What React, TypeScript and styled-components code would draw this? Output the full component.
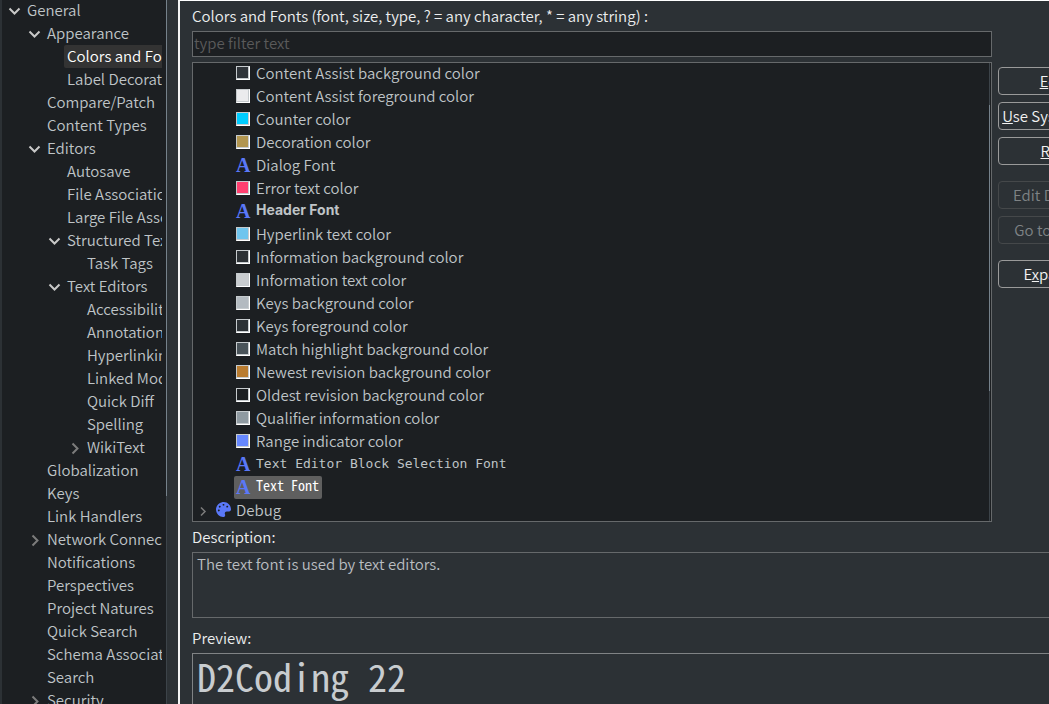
import React from 'react';
import styled, { createGlobalStyle, css } from 'styled-components';
import { FaPalette } from 'react-icons/fa';

const ui = '"Noto Sans CJK KR", "Noto Sans", sans-serif';
const mono = '"Noto Sans Mono CJK KR", "DejaVu Sans Mono", monospace';

const Global = createGlobalStyle`
  * { box-sizing: border-box; }
  body { margin: 0; background: #2c3135; font: 350 15px/21px ${ui}; color: #eceeef; overflow: hidden; }
  button, input { font: inherit; }
`;

const Page = styled.div`
  display: grid;
  grid-template-columns: 178px minmax(0, 1fr);
  height: 100vh;
  overflow: hidden;
`;

const Sidebar = styled.nav`
  display: grid;
  grid-template-columns: 160px 1px;
  column-gap: 4px;
  justify-content: start;
  margin: 0 11px 0 2px;
  background: #1c1f22;
  overflow: hidden;
`;

const NavList = styled.ul`
  list-style: none;
  margin: -1px 0 0;
  padding: 0;
  overflow: hidden;
`;

const NavItem = styled.li<{ $level: number }>`
  display: flex;
  height: 23px;
  padding-left: ${p => 4 + p.$level * 20}px;
`;

const Twisty = styled.span`
  display: flex;
  flex: none;
  align-items: center;
  width: 18px;
`;

const NavLink = styled.a<{ $active?: boolean }>`
  flex: 1 0 auto;
  padding: 0 3px;
  color: #bfc4c7;
  text-decoration: none;
  white-space: nowrap;
  ${p => p.$active && css`
    background: #333333;
    border-radius: 2px;
    color: #ffffff;
  `}
`;

const Track = styled.div`
  background: #3c4349;
`;

const Thumb = styled.div<{ $top: number; $height: number }>`
  height: ${p => p.$height}px;
  margin-top: ${p => p.$top}px;
  background: #75818b;
`;

const Main = styled.main`
  display: flex;
  flex-direction: column;
  min-width: 0;
  padding: 4px 0 0 12px;
  border-left: 2px solid #f4f4f4;
  border-top: 1px solid #ffffff;
  overflow: hidden;
`;

const Label = styled.label`
  display: block;
  height: 23px;
  white-space: nowrap;
`;

const Columns = styled.div`
  display: grid;
  grid-template-columns: minmax(0, 1fr) 51px;
  column-gap: 6px;
  margin-bottom: 4px;
`;

const Filter = styled.input`
  display: block;
  width: 100%;
  height: 26px;
  margin: 3px 0 5px;
  padding: 0 1px 4px;
  background: #1c1f22;
  border: 1px solid #66696b;
  border-radius: 0;
  color: #eceeef;
  outline: none;
  &::placeholder { color: #5a5a5a; opacity: 1; }
`;

const Tree = styled.div`
  display: grid;
  grid-template-columns: minmax(0, 1fr) 1px;
  padding-right: 1px;
  background: #1c1f22;
  border: 1px solid #66696b;
`;

const TreeList = styled.ul`
  list-style: none;
  margin: -1px 0;
  padding: 0;
`;

const TreeItem = styled.li<{ $root?: boolean }>`
  display: flex;
  height: 23px;
  padding-left: ${p => (p.$root ? 4 : 41)}px;
`;

const faces = {
  ui: css``,
  header: css`font: 700 14px/20px Inter, sans-serif;`,
  block: css`font: 13px/21px "DejaVu Sans Mono", monospace;`,
  text: css`font: 14px/18px ${mono};`,
};
type Face = keyof typeof faces;

const TreeLabel = styled.span<{ $selected?: boolean }>`
  display: flex;
  gap: 6px;
  padding: 0 3px 0 2px;
  color: #bfc4c7;
  white-space: pre;
  ${p => p.$selected && css`
    background: #5f5f5f;
    border-radius: 2px;
    color: #ffffff;
  `}
`;

const RootLabel = styled(TreeLabel)`
  padding-left: 1px;
  gap: 5px;
`;

const Name = styled.span<{ $face: Face }>`
  ${p => faces[p.$face]}
`;

const Swatch = styled.span<{ $color: string }>`
  width: 14px;
  height: 14px;
  margin-top: 4px;
  background: ${p => p.$color};
  border: 1px solid #c5cacd;
  border-right: 1px solid #ffffff;
  border-bottom: 1px solid #ffffff;
  box-shadow: inset -1px -1px 0 #c5cacd;
`;

const FontMark = styled.span`
  width: 14px;
  color: #5a78f8;
  font: bold 20px/23px "Liberation Serif", serif;
`;

const PaletteMark = styled(FaPalette)`
  width: 15px;
  height: 15px;
  margin: 3px 0 0;
  color: #5a78f8;
`;

const Buttons = styled.div`
  display: flex;
  flex-direction: column;
  gap: 7px;
  padding-top: 67px;
  margin-top: -5px;
`;

const Button = styled.button<{ $apart?: boolean }>`
  width: 123px;
  height: 28px;
  margin-top: ${p => (p.$apart ? 9 : 0)}px;
  padding: 0 0 2px;
  background: transparent;
  border: 1px solid #9a9a9a;
  border-radius: 4px;
  color: #f2f2f2;
  white-space: nowrap;
  &:disabled { border-color: #45484a; color: #7f8385; }
`;

const Description = styled.p`
  height: 66px;
  margin: 3px 0 9px;
  padding: 0 4px;
  border: 1px solid #66696b;
  border-right: 0;
  color: #b9bdc0;
`;

const Preview = styled.output`
  display: block;
  flex: 1;
  min-height: 51px;
  margin-top: 3px;
  padding-left: 4px;
  border: 1px solid #808385;
  border-width: 1px 0 0 1px;
  color: #c8cccf;
  font: 400 38px/44px ${mono};
  white-space: pre;
  overflow: hidden;
`;

const Chevron = ({ open, small }: { open?: boolean; small?: boolean }) => (
  <svg width="18" height="18" viewBox="0 0 18 18" fill="none" aria-hidden="true"
    stroke={open ? '#c8c8c8' : '#7c7c7c'} strokeWidth={small ? 1.5 : 2}>
    <path d={open ? 'M3.5 6.5L8.5 11.5L13.5 6.5' : small ? 'M4 5.5L8 9.5L4 13.5' : 'M6.5 4.5L11.5 9.5L6.5 14.5'} />
  </svg>
);

type Nav = { text: string; level: number; open?: boolean; active?: boolean };
const nav: Nav[] = [
  { text: 'General', level: 0, open: true },
  { text: 'Appearance', level: 1, open: true },
  { text: 'Colors and Fonts', level: 2, active: true },
  { text: 'Label Decorations', level: 2 },
  { text: 'Compare/Patch', level: 1 },
  { text: 'Content Types', level: 1 },
  { text: 'Editors', level: 1, open: true },
  { text: 'Autosave', level: 2 },
  { text: 'File Associations', level: 2 },
  { text: 'Large File Associations', level: 2 },
  { text: 'Structured Text Editors', level: 2, open: true },
  { text: 'Task Tags', level: 3 },
  { text: 'Text Editors', level: 2, open: true },
  { text: 'Accessibility', level: 3 },
  { text: 'Annotations', level: 3 },
  { text: 'Hyperlinking', level: 3 },
  { text: 'Linked Mode', level: 3 },
  { text: 'Quick Diff', level: 3 },
  { text: 'Spelling', level: 3 },
  { text: 'WikiText', level: 3, open: false },
  { text: 'Globalization', level: 1 },
  { text: 'Keys', level: 1 },
  { text: 'Link Handlers', level: 1 },
  { text: 'Network Connections', level: 1, open: false },
  { text: 'Notifications', level: 1 },
  { text: 'Perspectives', level: 1 },
  { text: 'Project Natures', level: 1 },
  { text: 'Quick Search', level: 1 },
  { text: 'Schema Associations', level: 1 },
  { text: 'Search', level: 1 },
  { text: 'Security', level: 1, open: false },
];

type Entry = { text: string; color?: string; face?: Face; selected?: boolean };
const entries: Entry[] = [
  { text: 'Content Assist background color', color: '#2f3439' },
  { text: 'Content Assist foreground color', color: '#ebebed' },
  { text: 'Counter color', color: '#00ccff' },
  { text: 'Decoration color', color: '#b29650' },
  { text: 'Dialog Font' },
  { text: 'Error text color', color: '#ff4070' },
  { text: 'Header Font', face: 'header' },
  { text: 'Hyperlink text color', color: '#6fc5ee' },
  { text: 'Information background color', color: '#2c3135' },
  { text: 'Information text color', color: '#c8cccf' },
  { text: 'Keys background color', color: '#b3bac0' },
  { text: 'Keys foreground color', color: '#2c3135' },
  { text: 'Match highlight background color', color: '#4a545a' },
  { text: 'Newest revision background color', color: '#b97c30' },
  { text: 'Oldest revision background color', color: '#1c1f22' },
  { text: 'Qualifier information color', color: '#8f9aa1' },
  { text: 'Range indicator color', color: '#6688ff' },
  { text: 'Text Editor Block Selection Font', face: 'block' },
  { text: 'Text Font', face: 'text', selected: true },
];

export default function App() {
  return (
    <Page>
      <Global />
      <Sidebar>
        <NavList>
          {nav.map(item => (
            <NavItem key={item.text} $level={item.level}>
              <Twisty>{item.open !== undefined && <Chevron open={item.open} />}</Twisty>
              <NavLink href="#" $active={item.active}>{item.text}</NavLink>
            </NavItem>
          ))}
        </NavList>
        <Track><Thumb $top={0} $height={496} /></Track>
      </Sidebar>
      <Main>
        <Columns>
          <div>
            <Label htmlFor="filter">Colors and Fonts (font, size, type, ? = any character, * = any string) :</Label>
            <Filter id="filter" placeholder="type filter text" />
            <Tree>
              <TreeList>
                {entries.map(e => (
                  <TreeItem key={e.text}>
                    <TreeLabel $selected={e.selected}>
                      {e.color ? <Swatch $color={e.color} /> : <FontMark aria-hidden="true">A</FontMark>}
                      <Name $face={e.face ?? 'ui'}>{e.text}</Name>
                    </TreeLabel>
                  </TreeItem>
                ))}
                <TreeItem $root>
                  <Twisty><Chevron small /></Twisty>
                  <RootLabel>
                    <PaletteMark />
                    <Name $face="ui">Debug</Name>
                  </RootLabel>
                </TreeItem>
              </TreeList>
              <Track><Thumb $top={42} $height={286} /></Track>
            </Tree>
          </div>
          <Buttons>
            <Button><u>E</u>dit...</Button>
            <Button><u>U</u>se System Font</Button>
            <Button><u>R</u>eset</Button>
            <Button $apart disabled>Edit Default...</Button>
            <Button disabled>Go to Default</Button>
            <Button $apart>E<u>x</u>pand All</Button>
          </Buttons>
        </Columns>
        <Label as="div" id="description">Description:</Label>
        <Description aria-labelledby="description">The text font is used by text editors.</Description>
        <Label htmlFor="preview">Preview:</Label>
        <Preview id="preview">D2Coding 22</Preview>
      </Main>
    </Page>
  );
}
